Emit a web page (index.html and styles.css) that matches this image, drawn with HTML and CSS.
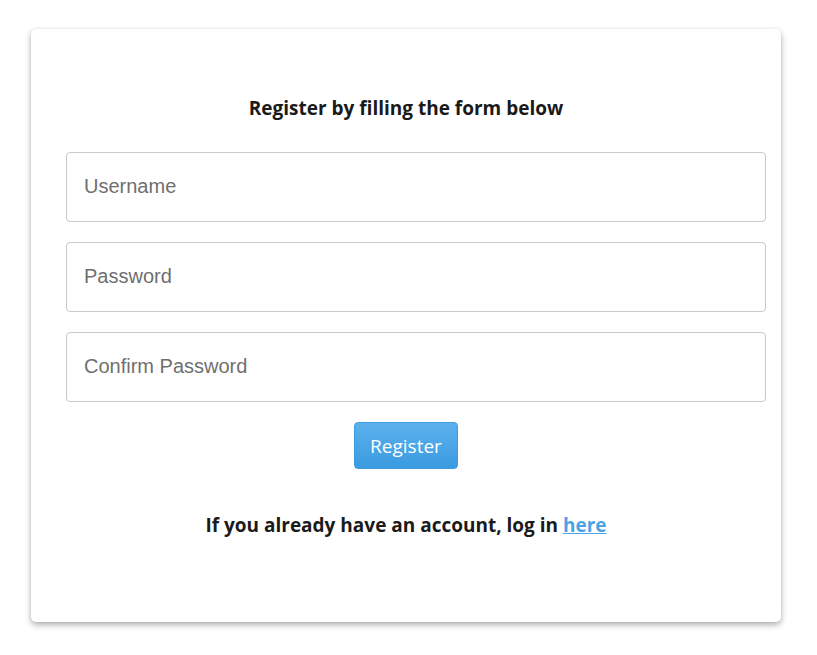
FILE: index.html
```html
<!DOCTYPE html>
<html>
<head>
<meta charset="utf-8">
<link rel="stylesheet" href="styles.css">
</head>
<body>
<div class="card">
  <h2 class="title">Register by filling the form below</h2>
  <form class="form">
    <input class="field" type="text" placeholder="Username">
    <input class="field" type="password" placeholder="Password">
    <input class="field" type="password" placeholder="Confirm Password">
    <button class="btn" type="button">Register</button>
  </form>
  <p class="footer">If you already have an account, log in <a href="#" class="link">here</a></p>
</div>
</body>
</html>
```
FILE: styles.css
```css
html, body {
  margin: 0;
  padding: 0;
  background: #ffffff;
}
body {
  padding: 29px 0 40px 31px;
  font-family: "Open Sans", "Noto Sans", sans-serif;
}
.card {
  width: 750px;
  height: 593px;
  box-sizing: border-box;
  background: #fff;
  border-radius: 5px;
  box-shadow: 0 3px 6px rgba(0,0,0,0.3), 0 0 4px rgba(0,0,0,0.06);
  padding: 64px 15px 0 35px;
}
.title {
  margin: 0 20px 29px 0;
  text-align: center;
  font-size: 19px;
  font-weight: 700;
  color: #1a1a1a;
  line-height: 30px;
}
.form {
  display: flex;
  flex-direction: column;
  gap: 20px;
}
.field {
  width: 700px;
  height: 70px;
  box-sizing: border-box;
  border: 1px solid #c9c9c9;
  border-radius: 4px;
  padding: 0 17px 2px;
  font-family: "Liberation Sans", Arial, sans-serif;
  font-size: 20px;
  color: #333;
  outline: none;
}
.field::placeholder {
  color: #6f6f6f;
}
.btn {
  align-self: center;
  margin-right: 20px;
  width: 104px;
  height: 47px;
  border: 1px solid #3d9be0;
  border-radius: 4px;
  background: linear-gradient(#5cb0ec, #3a9be0);
  color: #fff;
  font-family: "Open Sans", "Noto Sans", sans-serif;
  font-size: 19px;
  cursor: pointer;
}
.footer {
  margin: 41px 20px 0 0;
  text-align: center;
  font-size: 19px;
  font-weight: 700;
  color: #1a1a1a;
  line-height: 30px;
}
.link {
  color: #4aa3e6;
}
```
